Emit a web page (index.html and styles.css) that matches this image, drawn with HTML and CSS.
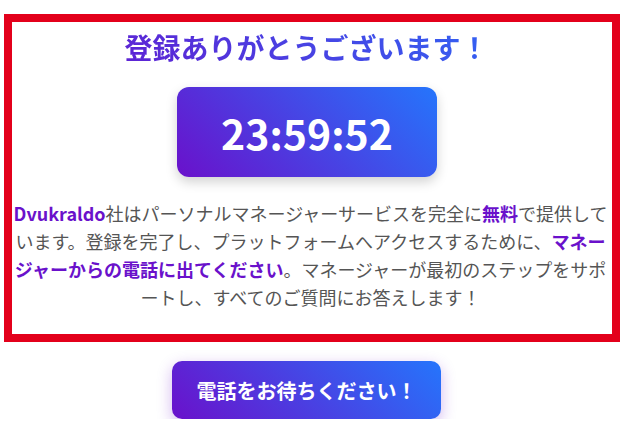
FILE: index.html
```html
<!DOCTYPE html>
<html lang="ja">
<head>
<meta charset="utf-8">
<title>登録ありがとうございます</title>
<link rel="stylesheet" href="styles.css">
</head>
<body>
  <main class="page">
    <section class="card">
      <h1 class="title">登録ありがとうございます！</h1>
      <div class="timer">23:59:52</div>
      <p class="message"><strong>Dvukraldo</strong>社はパーソナルマネージャーサービスを完全に<strong>無料</strong>で提供しています。登録を完了し、プラットフォームへアクセスするために、<strong>マネージャーからの電話に出てください</strong>。マネージャーが最初のステップをサポートし、すべてのご質問にお答えします！</p>
    </section>
    <div class="actions">
      <button class="call-btn" type="button">電話をお待ちください！</button>
    </div>
  </main>
</body>
</html>
```

FILE: styles.css
```css
html, body {
  margin: 0;
  padding: 0;
  background: #ffffff;
}

body {
  font-family: "Noto Sans CJK JP", "Noto Sans", sans-serif;
  color: #555555;
}

.page {
  padding: 14px 4px 0;
}

.card {
  border: 8px solid #e3001b;
  padding: 5px 4px 23px 1px;
  display: flex;
  flex-direction: column;
  align-items: center;
}

.title {
  margin: 0;
  width: 100%;
  box-sizing: border-box;
  padding-right: 8px;
  text-align: center;
  font-size: 28px;
  line-height: 40px;
  font-weight: 700;
  background: linear-gradient(45deg, #6a11cb, #2575fc);
  -webkit-background-clip: text;
  background-clip: text;
  color: transparent;
}

.timer {
  margin: 20px 7px 0 0;
  width: 260px;
  height: 90px;
  border-radius: 12px;
  background: linear-gradient(45deg, #6a11cb, #2575fc);
  box-shadow: 0 5px 12px rgba(0, 0, 0, 0.18);
  color: #ffffff;
  font-size: 41px;
  font-weight: 700;
  display: flex;
  align-items: center;
  justify-content: center;
}

.message {
  margin: 22px 0 0;
  width: 100%;
  font-size: 18px;
  line-height: 28px;
  text-align: center;
  color: #555555;
}

.message strong {
  color: #6a11cb;
  font-weight: 700;
}

.actions {
  display: flex;
  justify-content: center;
  padding: 19px 11px 0 0;
}

.call-btn {
  width: 269px;
  height: 58px;
  border: none;
  border-radius: 10px;
  background: linear-gradient(45deg, #6a11cb, #2575fc);
  box-shadow: 0 5px 15px rgba(106, 17, 203, 0.3);
  color: #ffffff;
  font-family: "Noto Sans CJK JP", "Noto Sans", sans-serif;
  font-size: 20px;
  font-weight: 700;
  padding: 0;
  cursor: pointer;
}
```
